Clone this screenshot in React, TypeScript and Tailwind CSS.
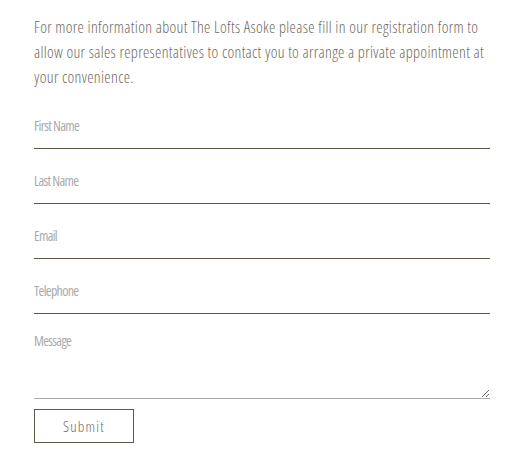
const FIELDS = [
  { label: "First Name", type: "text" },
  { label: "Last Name", type: "text" },
  { label: "Email", type: "email" },
  { label: "Telephone", type: "tel" },
];

const font = { fontFamily: '"Open Sans", "Liberation Sans", sans-serif', fontStretch: "75%" };

export default function App() {
  return (
    <div className="min-h-[455px] bg-white" style={font}>
      <div className="ml-[34px] w-[456px] pt-[15px]">
        <p className="w-[470px] text-[16px] font-light leading-[25px] text-[#6f6b62] tracking-[0.33px]">
          For more information about The Lofts Asoke please fill in our registration form to
          <br />
          allow our sales representatives to contact you to arrange a private appointment at
          <br />
          your convenience.
        </p>

        <form className="mt-[28px] flex flex-col" onSubmit={(e) => e.preventDefault()}>
          <div className="flex flex-col gap-6">
            {FIELDS.map((f) => (
              <label key={f.label} className="flex flex-col">
                <span className="h-4 text-[14px] leading-4 tracking-[-0.7px] text-[#ababab]">{f.label}</span>
                <input
                  type={f.type}
                  className="h-[15px] w-full border-b border-[#5d5848] bg-transparent outline-none"
                />
              </label>
            ))}
          </div>

          <label className="mt-[19px] flex flex-col">
            <span className="h-4 text-[14px] leading-4 tracking-[-0.7px] text-[#ababab]">Message</span>
            <textarea className="block h-[50px] w-full border-b border-[#a9a9a9] bg-transparent outline-none" />
          </label>

          <button
            type="submit"
            className="mt-[10px] h-[34px] w-[100px] border border-[#5e5a4c] text-[15px] font-light tracking-[1.2px] text-[#6f6b62]"
          >
            Submit
          </button>
        </form>
      </div>
    </div>
  );
}
